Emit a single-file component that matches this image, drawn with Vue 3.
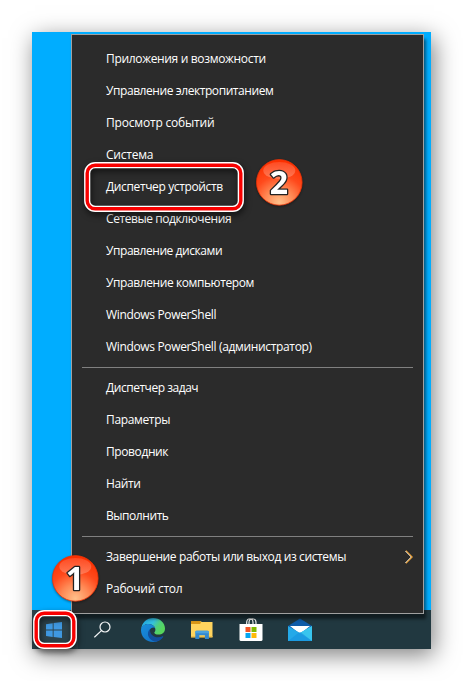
<script setup>
const groups = [
  [
    { text: 'Приложения и возможности', track: -0.33 },
    { text: 'Управление электропитанием', track: -0.43 },
    { text: 'Просмотр событий', track: -0.19 },
    { text: 'Система', track: -0.22 },
    { text: 'Диспетчер устройств', track: -0.37 },
    { text: 'Сетевые подключения', track: -0.42 },
    { text: 'Управление дисками', track: -0.44 },
    { text: 'Управление компьютером', track: -0.41 },
    { text: 'Windows PowerShell', track: -0.34 },
    { text: 'Windows PowerShell (администратор)', track: -0.34 },
  ],
  [
    { text: 'Диспетчер задач', track: -0.47 },
    { text: 'Параметры', track: -0.35 },
    { text: 'Проводник', track: -0.4 },
    { text: 'Найти', track: -0.4 },
    { text: 'Выполнить', track: -0.44 },
  ],
  [
    { text: 'Завершение работы или выход из системы', track: -0.38, sub: true },
    { text: 'Рабочий стол', track: -0.25 },
  ],
]
const badges = [
  { n: '1', cls: 'step-one' },
  { n: '2', cls: 'step-two' },
]
const frames = [
  { cls: 'frame-start', w: 44, h: 39, r: 8 },
  { cls: 'frame-item', w: 160, h: 50, r: 8 },
]
</script>

<template>
  <main class="page">
    <section class="desktop">
      <div class="wallpaper"></div>
      <footer class="taskbar">
        <div class="cell start">
          <svg width="16" height="16" viewBox="0 0 16 16" fill="#3f98e0">
            <path d="M0 2.2 6.7 1.2V7.6H0zM7.6 1.1 16 0V7.6H7.6zM0 8.5H6.7V14.9L0 13.9zM7.6 8.5H16V16L7.6 15z" />
          </svg>
        </div>
        <div class="cell search">
          <svg width="18" height="18" viewBox="0 0 18 18" fill="none" stroke="#f4f6f7" stroke-width="1.2">
            <circle cx="11" cy="6" r="5" /><path d="M7.400 9.600 .4 16.300" />
          </svg>
        </div>
        <div class="cell">
          <svg width="24" height="24" viewBox="0 0 24 24">
            <defs>
              <linearGradient id="edgeTop" x1="0" y1="0" x2="1" y2=".5">
                <stop offset="0" stop-color="#1b9de2" /><stop offset=".5" stop-color="#35c1df" /><stop offset=".75" stop-color="#4fd07a" /><stop offset="1" stop-color="#57d65c" />
              </linearGradient>
              <linearGradient id="edgeLow" x1="0" y1="0" x2="1" y2="1">
                <stop offset="0" stop-color="#1a8fdc" /><stop offset="1" stop-color="#0f6cc4" />
              </linearGradient>
            </defs>
            <path d="M.2 11C.8 4.6 6 0 12 0c7 0 12 5 12 10.400 0 4-3 6.200-6.400 6.200-2.900 0-4.300-1-4.300-1.800 0-.7 1.100-1.100 1.100-3.100C14.400 8.600 11.300 6 7.600 6 4 6 1.100 8 .2 11z" fill="url(#edgeTop)" />
            <path d="M0 12C0 8.200 3.500 6 7.400 6c3.300 0 6 1.800 6.800 4.200C12.500 8.800 9.700 9.500 8.700 12c-1.500 4 2 8.500 7 8.500 2.500 0 4.600-.7 6.300-2C20 22 16.300 24 12 24 5 24 0 18.700 0 12z" fill="url(#edgeLow)" />
            <path d="M9.100 11.200C6.200 13 6.100 18.400 9.800 21.400c2 1.600 4.200 2.300 6 2C19 22.500 21 20.800 22.200 18.700c.2-.5-.2-.7-.6-.5-6 3-13.400-.7-12.500-7z" fill="#124f9c" />
          </svg>
        </div>
        <div class="cell">
          <svg width="24" height="24" viewBox="0 0 24 24">
            <path d="M1 3h9l2 1h10.500v15H1z" fill="#ffd45e" />
            <path d="M1 3h9l1 1.500L10 6H1z" fill="#d99718" />
            <path d="M1 18h21.500v1.600H1z" fill="#f0bf4a" />
            <path d="M5.300 21V14.200q0-1.400 1.400-1.400H17.500q1.400 0 1.400 1.400V21h-4v-3.800H9.300V21z" fill="#3489d0" />
            <path d="M5.300 14.200q0-1.400 1.400-1.400H17.500q1.400 0 1.400 1.400v1H5.300z" fill="#4aa2df" />
          </svg>
        </div>
        <div class="cell">
          <svg width="24" height="24" viewBox="0 0 24 24">
            <path d="M7.700 7V4.500Q7.700 .8 11 .8q3 0 3 3.700V7M10 7V4.500Q10 .8 13.500 .8q3.500 0 3.500 3.700V7" fill="none" stroke="#fff" stroke-width="1.100" />
            <path d="M.5 6h23v15.500q0 1.500-1.500 1.500H2Q.5 23 .5 21.500z" fill="#fff" />
            <path d="M6.500 9h5v5h-5z" fill="#f15325" /><path d="M12.500 9h5v5h-5z" fill="#7fba00" />
            <path d="M6.500 15h5v5h-5z" fill="#05a6f0" /><path d="M12.500 15h5v5h-5z" fill="#ffba08" />
          </svg>
        </div>
        <div class="cell">
          <svg width="24" height="24" viewBox="0 0 24 24">
            <path d="M0 8 12 .5 24 8v5H0z" fill="#0f5ca8" />
            <path d="M2 8h20l-10 8z" fill="#fff" />
            <path d="M0 8 12 15 24 8v15H0z" fill="#24a9e8" />
            <path d="M24 8v15L12 15z" fill="#38c5ee" />
            <path d="M0 23 11 14.500q1-.7 2 0L24 23z" fill="#1794df" opacity=".65" />
          </svg>
        </div>
      </footer>

      <nav class="menu">
        <ul v-for="(group, g) in groups" :key="g" class="group">
          <li v-for="item in group" :key="item.text" class="item">
            <span :style="{ letterSpacing: item.track + 'px' }">{{ item.text }}</span>
            <svg v-if="item.sub" class="chevron" width="8" height="14" viewBox="0 0 8 14" fill="none">
              <path d="M.8 .8 7 7 .8 13.200" stroke="#e99a2a" stroke-width="1.500" />
              <path d="M.3 1 6.200 7 .3 13" stroke="#d5e2ee" stroke-width=".8" />
            </svg>
          </li>
        </ul>
      </nav>

      <svg v-for="f in frames" :key="f.cls" class="frame" :class="f.cls" :width="f.w" :height="f.h">
        <g fill="none">
          <rect x="3.200" y="3.200" :width="f.w - 6.4" :height="f.h - 6.4" :rx="f.r" stroke="#fff" stroke-width="6.200" />
          <rect x="3.200" y="3.200" :width="f.w - 6.4" :height="f.h - 6.4" :rx="f.r" stroke="#f80000" stroke-width="3.400" />
        </g>
      </svg>
      <svg v-for="b in badges" :key="b.n" class="badge" :class="b.cls" width="50" height="50" viewBox="0 0 50 50">
        <defs>
          <radialGradient :id="'ball' + b.n" cx=".5" cy=".94" r=".9">
            <stop offset="0" stop-color="#ffc08a" /><stop offset=".35" stop-color="#ff8854" />
            <stop offset=".65" stop-color="#ff4a1c" /><stop offset="1" stop-color="#fc3000" />
          </radialGradient>
          <linearGradient :id="'gloss' + b.n" x1="0" y1="0" x2="0" y2="1">
            <stop offset="0" stop-color="#ff5a35" /><stop offset="1" stop-color="#ff9474" />
          </linearGradient>
        </defs>
        <circle cx="25.300" cy="25.400" r="22.800" :fill="`url(#ball${b.n})`" stroke="#ee3408" stroke-width=".8" />
        <ellipse cx="25.300" cy="13.500" rx="16" ry="8.500" :fill="`url(#gloss${b.n})`" opacity=".65" />
        <text x="25" y="36.700" text-anchor="middle" class="digit">{{ b.n }}</text>
      </svg>
    </section>
  </main>
</template>

<style>
body {
  margin: 0;
  background: #fff;
}
</style>

<style scoped>
.page {
  box-sizing: border-box;
  width: 463px;
  height: 681px;
  padding: 32px;
  overflow: hidden;
  background: #fff;
  font-family: "Open Sans", "Noto Sans", sans-serif;
}
.desktop {
  position: relative;
  display: flex;
  flex-direction: column;
  width: 399px;
  height: 617px;
  box-shadow: 3px 6px 22px rgba(0, 0, 0, 0.5);
}
.wallpaper {
  flex: 1;
  background: #00adff;
}
.taskbar {
  display: flex;
  height: 39px;
  background: #213840;
}
.cell {
  display: flex;
  align-items: center;
  justify-content: center;
  width: 49px;
  padding-top: 1px;
  box-sizing: border-box;
}
.cell.start {
  width: 46px;
  padding-right: 2px;
  background: #2d434b;
}
.cell.search {
  width: 50px;
  padding-top: 0;
}
.menu {
  position: absolute;
  left: 39px;
  top: 2px;
  box-sizing: border-box;
  width: 353px;
  height: 580px;
  padding: 8px 10px;
  border: 1px solid #a0a0a0;
  background: #2b2b2b;
  box-shadow: 2px 5px 3px rgba(0, 0, 0, 0.5);
}
.group {
  margin: 0;
  padding: 0;
  list-style: none;
}
.group + .group {
  margin-top: 4px;
  padding-top: 4px;
  border-top: 1px solid #808080;
}
.item {
  display: flex;
  align-items: center;
  justify-content: space-between;
  height: 32px;
  padding-left: 24px;
  color: #fff;
  font-size: 12px;
  line-height: 16px;
  white-space: nowrap;
}
.frame {
  position: absolute;
  overflow: visible;
  filter: drop-shadow(1px 3px 3px rgba(0, 0, 0, 0.6));
}
.frame-start {
  left: 1px;
  top: 578px;
}
.frame-item {
  left: 52px;
  top: 130px;
}
.badge {
  position: absolute;
  filter: drop-shadow(0 1px 1px rgba(0, 0, 0, 0.4));
}
.step-one {
  left: 18px;
  top: 521px;
}
.step-two {
  left: 222px;
  top: 125px;
}
.digit {
  font: 700 32px "Open Sans", "Noto Sans", sans-serif;
  fill: #fff;
  stroke: #222;
  stroke-width: 2.600px;
  stroke-linejoin: round;
  paint-order: stroke;
}
</style>
